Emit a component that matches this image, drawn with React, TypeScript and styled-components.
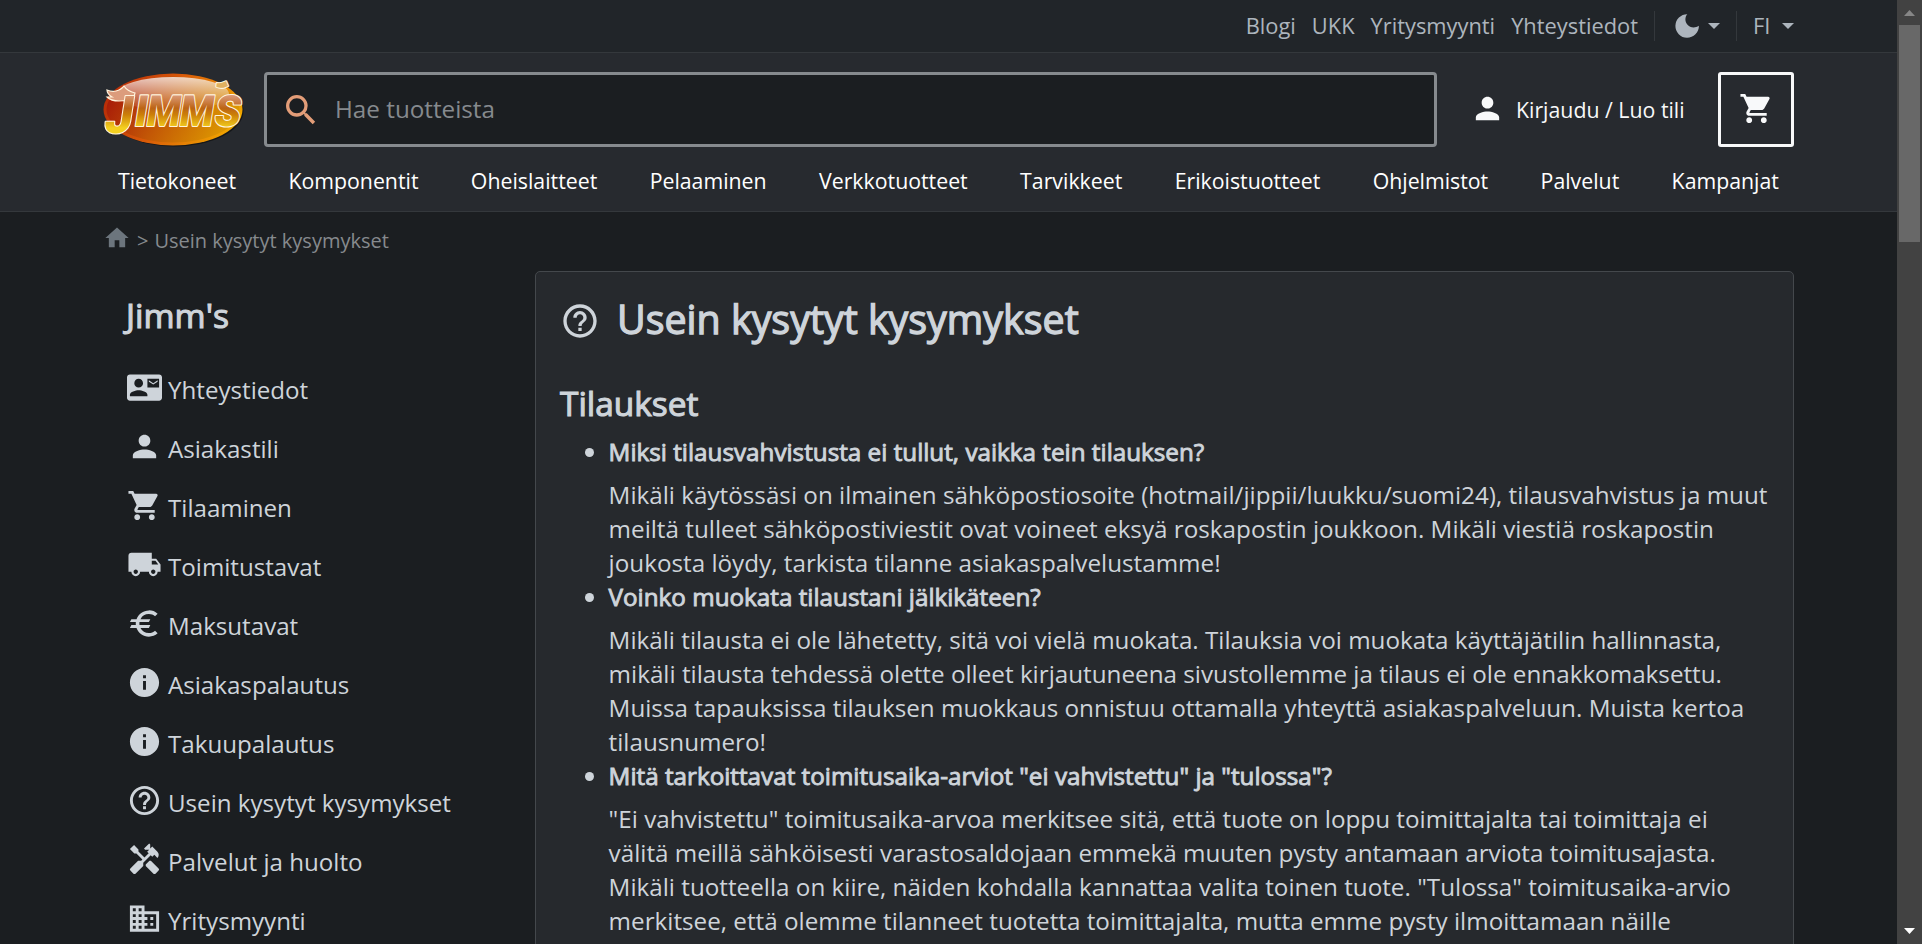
import React from "react";
import styled, { createGlobalStyle } from "styled-components";
import {
  MdContactMail, MdPerson, MdShoppingCart, MdLocalShipping, MdEuro, MdInfo,
  MdHelpOutline, MdHandyman, MdBusiness, MdHome, MdSearch,
} from "react-icons/md";

const GlobalStyle = createGlobalStyle`
  * { box-sizing: border-box; }
  html, body { margin: 0; height: 100%; overflow: hidden; background: #1b1e21; }
  body { font-family: "Open Sans", "Noto Sans", sans-serif; font-size: 24.24px; color: #ced4da; }
  #root { height: 100%; }
  svg { display: block; flex: none; }
`;

const Frame = styled.div`
  display: grid;
  grid-template-columns: minmax(0, 1fr) 25px;
  height: 944px;
  overflow: hidden;
`;
const Page = styled.div`
  height: 944px;
  overflow: hidden;
`;
const Container = styled.div`
  width: 1691px;
  margin-left: 103px;
`;

const TopBar = styled.div`
  height: 53px;
  background: #212529;
  border-bottom: 1px solid #34383c;
`;
const TopLinks = styled(Container)`
  display: flex;
  justify-content: flex-end;
  align-items: center;
  height: 52px;
  font-size: 21.85px;
  color: #adb5bd;
`;
const TopLink = styled.a`
  margin-right: 16px;
  padding-bottom: 2px;
  white-space: nowrap;
`;
const Picker = styled.div<{ $width: number; $pad: number }>`
  display: flex;
  align-items: center;
  width: ${(p) => p.$width}px;
  height: 30px;
  padding-left: ${(p) => p.$pad}px;
  border-left: 1px solid #34383c;
`;
const Language = styled.span`
  width: 27px;
  padding-bottom: 1px;
`;
const Caret = styled.span<{ $gap: number }>`
  margin-left: ${(p) => p.$gap}px;
  border: 6px solid transparent;
  border-top-color: #adb5bd;
  border-bottom: 0;
`;

const Header = styled.header`
  height: 159px;
  background: #272a2f;
  border-bottom: 1px solid #34383c;
`;
const HeaderRow = styled(Container)`
  display: flex;
  align-items: center;
  padding-top: 19px;
  height: 94px;
`;
const SearchBox = styled.div`
  display: flex;
  align-items: center;
  width: 1173px;
  height: 75px;
  margin-left: 18px;
  padding-left: 14px;
  border: 3px solid #868a8e;
  border-radius: 4px;
  background: #1b1e21;
  color: #868a8e;
  svg { color: #e39d78; }
`;
const Placeholder = styled.span`
  margin-left: 14px;
  padding-bottom: 2px;
`;
const Login = styled.a`
  display: flex;
  align-items: center;
  gap: 11px;
  margin-left: 33px;
  font-size: 21.3px;
  color: #f8f9fa;
  white-space: nowrap;
  svg { margin-top: -3px; }
`;
const Cart = styled.button`
  display: flex;
  align-items: center;
  justify-content: center;
  width: 76px;
  height: 75px;
  margin-left: auto;
  padding: 0 0 3px;
  border: 3px solid #f8f9fa;
  border-radius: 3px;
  background: none;
  color: #f8f9fa;
`;
const Nav = styled(Container).attrs({ as: "nav" })`
  display: flex;
  justify-content: space-between;
  align-items: center;
  height: 64px;
  padding: 3px 15px 0;
  font-size: 21.3px;
  color: #fff;
`;

const Crumbs = styled(Container)`
  display: flex;
  align-items: center;
  height: 59px;
  font-size: 20px;
  color: #868a8e;
  svg { margin-bottom: 7px; color: #6c757d; }
`;
const CrumbText = styled.span`
  margin-left: 6px;
  padding-bottom: 2px;
`;
const Columns = styled(Container)`
  display: grid;
  grid-template-columns: 432px 1259px;
`;

const Side = styled.aside`
  padding: 22px 0 0 21px;
  font-size: 24.15px;
`;
const SideTitle = styled.h2`
  margin: 0 0 21px 2px;
  font-size: 33.6px;
  line-height: 44px;
  font-weight: 400;
  -webkit-text-stroke: 1.1px currentColor;
`;
const SideLink = styled.a`
  display: flex;
  align-items: center;
  gap: 6px;
  height: 59px;
  padding-left: 3px;
  white-space: nowrap;
`;
const SideLabel = styled.span`
  padding-top: 3px;
`;

const Card = styled.main`
  height: 760px;
  padding: 22px 24px;
  border: 1px solid #44484c;
  border-radius: 5px;
  background: #26292d;
`;
const Title = styled.h1`
  display: flex;
  align-items: center;
  gap: 17px;
  height: 54px;
  margin: 0;
  font-size: 39.4px;
  font-weight: 400;
  -webkit-text-stroke: 1.3px currentColor;
  svg { margin-bottom: 1px; stroke-width: 0; }
`;
const TitleText = styled.span`
  padding-bottom: 4px;
`;
const Section = styled.h2`
  margin: 33px 0 10px;
  font-size: 33.4px;
  line-height: 44px;
  font-weight: 400;
  -webkit-text-stroke: 1.1px currentColor;
`;
const Faq = styled.ul`
  margin: 0;
  padding-left: 48.6px;
  line-height: 34px;
`;
const Question = styled.div`
  -webkit-text-stroke: 0.9px currentColor;
`;
const Answer = styled.div`
  margin-top: 9px;
  white-space: pre;
`;

const ScrollTrack = styled.div`
  display: flex;
  flex-direction: column;
  align-items: center;
  height: 944px;
  background: #424242;
`;
const ScrollThumb = styled.div`
  width: 21px;
  height: 217px;
  margin-bottom: auto;
  background: #686868;
`;

const side: [React.ComponentType<{ size?: number }>, string][] = [
  [MdContactMail, "Yhteystiedot"],
  [MdPerson, "Asiakastili"],
  [MdShoppingCart, "Tilaaminen"],
  [MdLocalShipping, "Toimitustavat"],
  [MdEuro, "Maksutavat"],
  [MdInfo, "Asiakaspalautus"],
  [MdInfo, "Takuupalautus"],
  [MdHelpOutline, "Usein kysytyt kysymykset"],
  [MdHandyman, "Palvelut ja huolto"],
  [MdBusiness, "Yritysmyynti"],
];
const nav = ["Tietokoneet", "Komponentit", "Oheislaitteet", "Pelaaminen", "Verkkotuotteet",
  "Tarvikkeet", "Erikoistuotteet", "Ohjelmistot", "Palvelut", "Kampanjat"];
const faq: [string, string][] = [
  ["Miksi tilausvahvistusta ei tullut, vaikka tein tilauksen?",
    `Mikäli käytössäsi on ilmainen sähköpostiosoite (hotmail/jippii/luukku/suomi24), tilausvahvistus ja muut
meiltä tulleet sähköpostiviestit ovat voineet eksyä roskapostin joukkoon. Mikäli viestiä roskapostin
joukosta löydy, tarkista tilanne asiakaspalvelustamme!`],
  ["Voinko muokata tilaustani jälkikäteen?",
    `Mikäli tilausta ei ole lähetetty, sitä voi vielä muokata. Tilauksia voi muokata käyttäjätilin hallinnasta,
mikäli tilausta tehdessä olette olleet kirjautuneena sivustollemme ja tilaus ei ole ennakkomaksettu.
Muissa tapauksissa tilauksen muokkaus onnistuu ottamalla yhteyttä asiakaspalveluun. Muista kertoa
tilausnumero!`],
  ["Mitä tarkoittavat toimitusaika-arviot \"ei vahvistettu\" ja \"tulossa\"?",
    `"Ei vahvistettu" toimitusaika-arvoa merkitsee sitä, että tuote on loppu toimittajalta tai toimittaja ei
välitä meillä sähköisesti varastosaldojaan emmekä muuten pysty antamaan arviota toimitusajasta.
Mikäli tuotteella on kiire, näiden kohdalla kannattaa valita toinen tuote. "Tulossa" toimitusaika-arvio
merkitsee, että olemme tilanneet tuotetta toimittajalta, mutta emme pysty ilmoittamaan näille`],
];

const LogoArt = styled.svg`
  overflow: visible;
  font-family: Roboto, sans-serif;
  font-weight: 900;
  text {
    paint-order: stroke;
    stroke: #fff3dc;
    stroke-width: 2.2px;
    stroke-linejoin: round;
  }
`;

const Logo = () => (
  <LogoArt width="143" height="76" viewBox="0 0 143 76">
    <defs>
      <linearGradient id="rim" x1="0" y1="0.3" x2="1" y2="0.6">
        <stop offset="0" stopColor="#b52a08" />
        <stop offset="0.45" stopColor="#d95a08" />
        <stop offset="1" stopColor="#f2a900" />
      </linearGradient>
      <linearGradient id="fill" x1="0" y1="0.4" x2="1" y2="0.7">
        <stop offset="0" stopColor="#a81c08" />
        <stop offset="0.45" stopColor="#c45a06" />
        <stop offset="1" stopColor="#e0a000" />
      </linearGradient>
      <linearGradient id="gloss" x1="0" y1="0" x2="0" y2="1">
        <stop offset="0" stopColor="#fff" stopOpacity="0.75" />
        <stop offset="1" stopColor="#fff" stopOpacity="0" />
      </linearGradient>
      <linearGradient id="letters" gradientUnits="userSpaceOnUse" x1="0" y1="-31" x2="0" y2="2">
        <stop offset="0" stopColor="#dc9c7c" />
        <stop offset="0.4" stopColor="#bc6414" />
        <stop offset="0.6" stopColor="#cc8008" />
        <stop offset="1" stopColor="#f4d020" />
      </linearGradient>
    </defs>
    <ellipse cx="71.500" cy="39" rx="69" ry="35.500" fill="#15171a" />
    <ellipse cx="70" cy="37.500" rx="69.500" ry="36" fill="url(#rim)" />
    <ellipse cx="70" cy="37.500" rx="66.500" ry="33" fill="url(#fill)" />
    <ellipse cx="70" cy="22" rx="56" ry="17" fill="url(#gloss)" />
    <path d="M4 18Q9 20 13 19Q18 18 21 14Q24 19 32 21L30 28L16 29Q8 29 4 25L9 25Q4 22 4 18Z" fill="#dc9c7c" stroke="#fff3dc" strokeWidth="1.200" />
    <g fill="url(#letters)" transform="translate(0 54) skewX(-9)">
      <text y="7" x="1" fontSize="52" textLength="28" lengthAdjust="spacingAndGlyphs">J</text>
      <text y="0" x="30" fontSize="43" textLength="13" lengthAdjust="spacingAndGlyphs">I</text>
      <text y="0" x="42" fontSize="43" textLength="34" lengthAdjust="spacingAndGlyphs">M</text>
      <text y="0" x="75" fontSize="43" textLength="34" lengthAdjust="spacingAndGlyphs">M</text>
      <text y="0" x="110" fontSize="43" textLength="26" lengthAdjust="spacingAndGlyphs">S</text>
    </g>
    <g fill="#e0b060" transform="translate(117 14) rotate(68)">
      <text x="-5" y="24" fontSize="42">’</text>
    </g>
  </LogoArt>
);

const Moon = () => (
  <svg width="24" height="24" viewBox="0 0 24 24" fill="#adb5bd">
    <path d="M12.300.2C9.800 3 9.800 7.500 12.300 10.500C15 13.800 20 14.300 23.900 11.800C24 18.500 18.500 23.700 12 23.700A11.750 11.750 0 0 1 12.300.2Z" />
  </svg>
);

export default function App() {
  return (
    <Frame>
      <GlobalStyle />
      <Page>
        <TopBar>
          <TopLinks>
            {["Blogi", "UKK", "Yritysmyynti", "Yhteystiedot"].map((t) => <TopLink key={t}>{t}</TopLink>)}
            <Picker $width={82} $pad={20}><Moon /><Caret $gap={9} /></Picker>
            <Picker $width={58} $pad={16}><Language>FI</Language><Caret $gap={2} /></Picker>
          </TopLinks>
        </TopBar>
        <Header>
          <HeaderRow>
            <Logo />
            <SearchBox><MdSearch size={40} /><Placeholder>Hae tuotteista</Placeholder></SearchBox>
            <Login><MdPerson size={35} />Kirjaudu / Luo tili</Login>
            <Cart><MdShoppingCart size={35} /></Cart>
          </HeaderRow>
          <Nav>{nav.map((t) => <span key={t}>{t}</span>)}</Nav>
        </Header>
        <Crumbs><MdHome size={28} /><CrumbText>&gt;</CrumbText><CrumbText>Usein kysytyt kysymykset</CrumbText></Crumbs>
        <Columns>
          <Side>
            <SideTitle>Jimm's</SideTitle>
            {side.map(([Icon, label]) => (
              <SideLink key={label}><Icon size={35} /><SideLabel>{label}</SideLabel></SideLink>
            ))}
          </Side>
          <Card>
            <Title><MdHelpOutline size={40} /><TitleText>Usein kysytyt kysymykset</TitleText></Title>
            <Section>Tilaukset</Section>
            <Faq>
              {faq.map(([q, a]) => <li key={q}><Question>{q}</Question><Answer>{a}</Answer></li>)}
            </Faq>
          </Card>
        </Columns>
      </Page>
      <ScrollTrack>
        <svg width="25" height="25" viewBox="0 0 25 25"><path d="M7 16l5.500-6 5.500 6z" fill="#868686" /></svg>
        <ScrollThumb />
        <svg width="25" height="25" viewBox="0 0 25 25"><path d="M7 9l5.500 6 5.500-6z" fill="#fff" /></svg>
      </ScrollTrack>
    </Frame>
  );
}
